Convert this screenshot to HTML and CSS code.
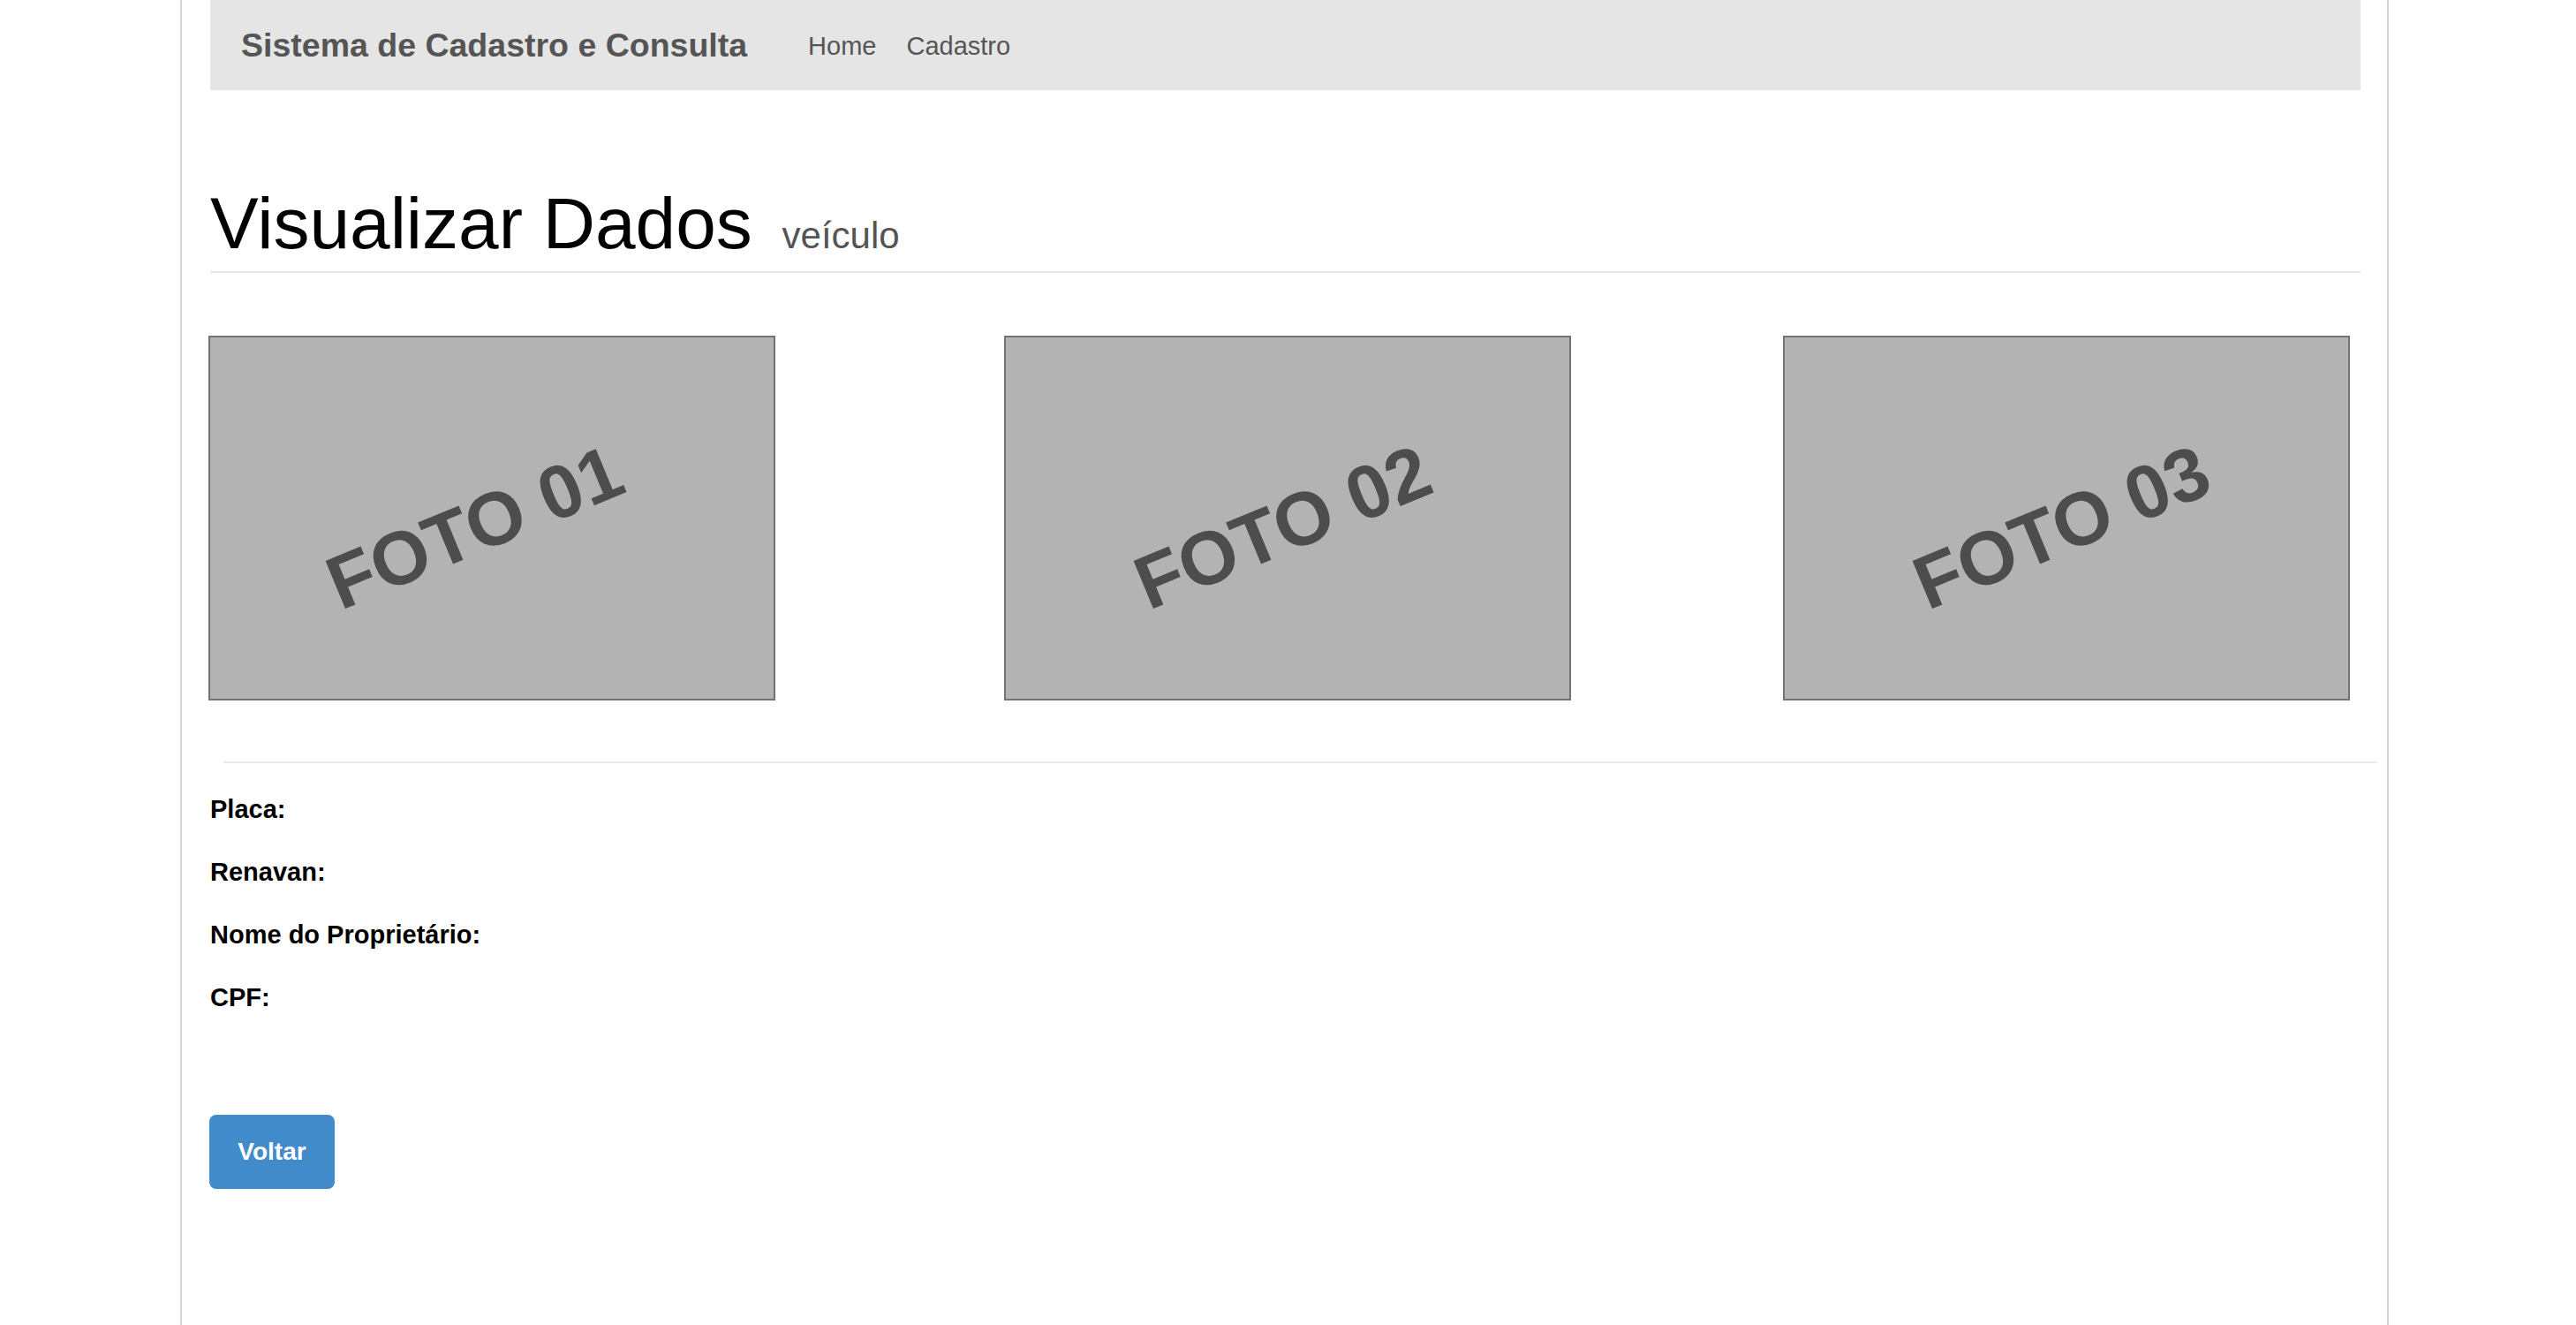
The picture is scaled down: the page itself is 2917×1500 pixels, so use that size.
FILE: index.html
```html
<!DOCTYPE html>
<html lang="pt-BR">
<head>
<meta charset="utf-8">
<title>Visualizar Dados - veículo</title>
<link rel="stylesheet" href="styles.css">
</head>
<body>
<div class="container">
  <nav class="navbar">
    <a class="brand" href="#">Sistema de Cadastro e Consulta</a>
    <ul class="nav">
      <li><a href="#">Home</a></li>
      <li><a href="#">Cadastro</a></li>
    </ul>
  </nav>

  <div class="page-header">
    <h1>Visualizar Dados <small>veículo</small></h1>
  </div>

  <div class="photos">
    <div class="photo photo-1"><span class="photo-label">FOTO 01</span></div>
    <div class="photo photo-2"><span class="photo-label">FOTO 02</span></div>
    <div class="photo photo-3"><span class="photo-label">FOTO 03</span></div>
  </div>

  <hr class="divider">

  <div class="fields">
    <div class="field"><label>Placa:</label></div>
    <div class="field"><label>Renavan:</label></div>
    <div class="field"><label>Nome do Proprietário:</label></div>
    <div class="field"><label>CPF:</label></div>
  </div>

  <button class="btn" type="button">Voltar</button>
</div>
</body>
</html>
```
FILE: styles.css
```css
* { box-sizing: border-box; }

html, body {
  margin: 0;
  padding: 0;
  background: #fff;
}

body {
  font-family: "Liberation Sans", Arial, Helvetica, sans-serif;
  color: #000;
}

.container {
  margin-left: 204px;
  width: 2501px;
  min-height: 1500px;
  border-left: 2px solid #d6d6d6;
  border-right: 2px solid #d6d6d6;
  padding: 0 30px 0 32px;
}

/* Navbar */
.navbar {
  height: 102px;
  background: #e5e5e5;
  display: flex;
  align-items: flex-start;
  padding-left: 35px;
}

.brand {
  font-size: 37.5px;
  font-weight: bold;
  line-height: 102px;
  color: #555;
  text-decoration: none;
}

.nav {
  list-style: none;
  margin: 2px 0 0 69px;
  padding: 0;
  display: flex;
  gap: 34px;
}

.nav a {
  display: block;
  font-size: 29px;
  line-height: 100px;
  color: #555;
  text-decoration: none;
}

/* Header */
.page-header {
  margin-top: 106px;
  padding-bottom: 9px;
  border-bottom: 2px solid #e8e8e8;
}

.page-header h1 {
  margin: 0;
  font-size: 82px;
  font-weight: normal;
  line-height: 90px;
  color: #000;
}

.page-header small {
  font-size: 42px;
  line-height: 1;
  color: #555;
  margin-left: 11px;
}

/* Photos */
.photos {
  display: flex;
  margin-top: 71px;
  margin-left: -2px;
}

.photo {
  width: 642px;
  height: 413px;
  background: #b3b3b3;
  border: 2px solid #737373;
  display: flex;
  align-items: center;
  justify-content: center;
  overflow: hidden;
}

.photo-2 { margin-left: 259px; }
.photo-3 { margin-left: 240px; }

.photo-label {
  display: block;
  font-size: 85px;
  font-weight: bold;
  line-height: 1;
  color: #4d4d4d;
  white-space: nowrap;
  transform: translate(-6px, 10px) rotate(-22.5deg);
}

.photo-1 .photo-label {
  transform: translate(-20px, 10px) rotate(-22.5deg);
}

/* Divider */
.divider {
  margin: 69px -19px 0 15px;
  border: 0;
  border-top: 2px solid #ebebeb;
  height: 0;
}

/* Fields */
.fields {
  margin-top: 32px;
  display: flex;
  flex-direction: column;
  gap: 31px;
}

.field label {
  display: block;
  font-size: 29px;
  font-weight: bold;
  line-height: 40px;
  color: #000;
}

/* Button */
.btn {
  display: block;
  margin: 113px 0 0 -1px;
  width: 142px;
  height: 84px;
  padding: 0;
  border: 0;
  border-radius: 8px;
  background: #428bca;
  color: #fff;
  font-family: "Liberation Sans", Arial, Helvetica, sans-serif;
  font-size: 28px;
  font-weight: bold;
  line-height: 84px;
  text-align: center;
  cursor: pointer;
}
```
